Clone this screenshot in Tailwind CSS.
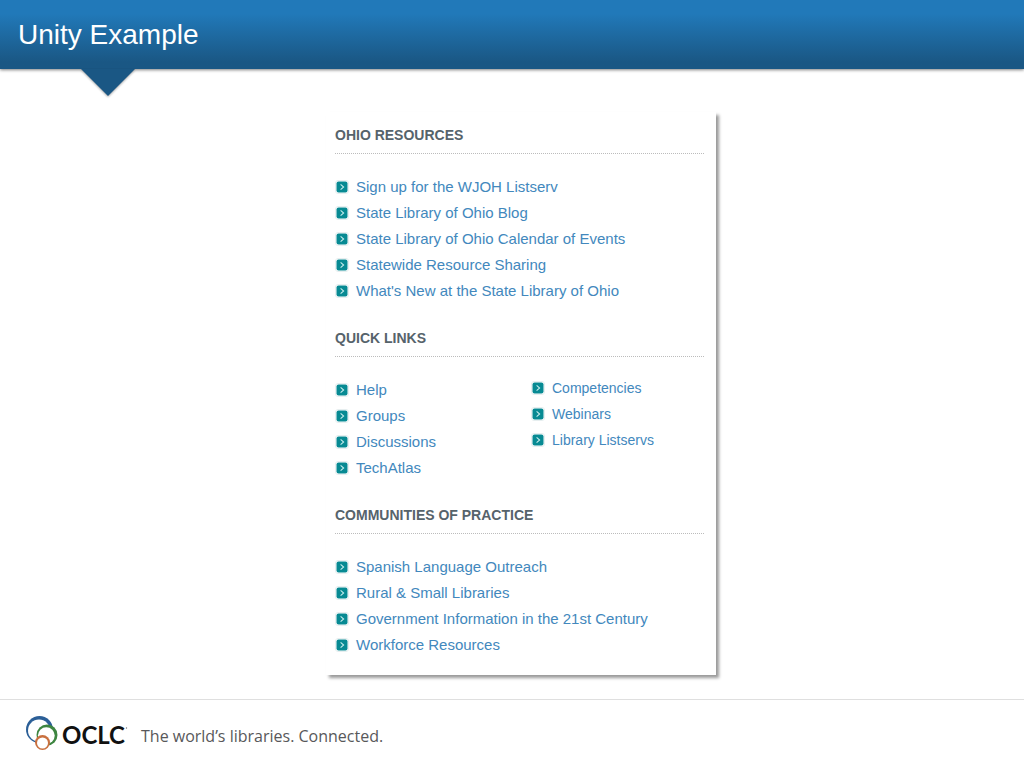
<!DOCTYPE html>
<html lang="en">
<head>
  <meta charset="UTF-8">
  <meta name="viewport" content="width=device-width, initial-scale=1">
  <title>Unity Example</title>
  <script src="https://cdn.jsdelivr.net/npm/@tailwindcss/browser@4"></script>
</head>
<body class="flex min-h-screen flex-col bg-white font-['Liberation_Sans',Arial,sans-serif]">
  <!-- icon shared by all links -->
  <svg class="hidden" aria-hidden="true">
    <symbol id="arrow" viewBox="0 0 14 14">
      <rect x="0.5" y="0.5" width="13" height="13" rx="2.5" fill="#fff" stroke="#e6eeef"/>
      <rect x="1.5" y="1.5" width="11" height="11" rx="2" fill="#078a93"/>
      <path d="M5.6 4.4 L8.6 7 L5.6 9.6" fill="none" stroke="#c5ecec" stroke-width="1.1"/>
    </symbol>
  </svg>

  <header class="relative bg-linear-to-b from-[#2179b9] from-20% to-[#1a5784] to-90% px-[18px] pt-[17px] pb-4 shadow-[0_1px_3px_rgba(0,0,0,0.5)]">
    <h1 class="text-[28px] leading-9 text-white">Unity Example</h1>
    <svg class="absolute top-full left-20 h-8 w-14 drop-shadow-[0_1px_1px_rgba(0,0,0,0.35)]" viewBox="0 0 56 32" aria-hidden="true">
      <path d="M1 0 H55 L28 27 Z" fill="#1a5784"/>
    </svg>
  </header>

  <main class="flex flex-1 items-start justify-center pt-[43px] pb-6">
    <div class="mr-[-18px] flex w-full max-w-[390px] flex-col gap-6 bg-white pt-[13px] pr-3 pb-[17px] pl-[9px] shadow-[3px_3px_3px_rgba(0,0,0,0.4)]">
      <section>
        <h2 class="border-b border-dotted border-[#bcbcbc] pb-2 text-sm leading-5 font-bold text-[#56636b]">OHIO RESOURCES</h2>
        <ul class="mt-5 text-[15px] leading-[26px] text-[#4288bd]">
          <li><a href="#" class="flex items-center gap-[7px]"><svg class="size-3.5"><use href="#arrow"/></svg>Sign up for the WJOH Listserv</a></li>
          <li><a href="#" class="flex items-center gap-[7px]"><svg class="size-3.5"><use href="#arrow"/></svg>State Library of Ohio Blog</a></li>
          <li><a href="#" class="flex items-center gap-[7px]"><svg class="size-3.5"><use href="#arrow"/></svg>State Library of Ohio Calendar of Events</a></li>
          <li><a href="#" class="flex items-center gap-[7px]"><svg class="size-3.5"><use href="#arrow"/></svg>Statewide Resource Sharing</a></li>
          <li><a href="#" class="flex items-center gap-[7px]"><svg class="size-3.5"><use href="#arrow"/></svg>What's New at the State Library of Ohio</a></li>
        </ul>
      </section>

      <section>
        <h2 class="border-b border-dotted border-[#bcbcbc] pb-2 text-sm leading-5 font-bold text-[#56636b]">QUICK LINKS</h2>
        <div class="mt-5 grid grid-cols-[196px_1fr] text-[#4288bd]">
          <ul class="text-[15px] leading-[26px]">
            <li><a href="#" class="flex items-center gap-[7px]"><svg class="size-3.5"><use href="#arrow"/></svg>Help</a></li>
            <li><a href="#" class="flex items-center gap-[7px]"><svg class="size-3.5"><use href="#arrow"/></svg>Groups</a></li>
            <li><a href="#" class="flex items-center gap-[7px]"><svg class="size-3.5"><use href="#arrow"/></svg>Discussions</a></li>
            <li><a href="#" class="flex items-center gap-[7px]"><svg class="size-3.5"><use href="#arrow"/></svg>TechAtlas</a></li>
          </ul>
          <ul class="-mt-0.5 text-sm leading-[26px]">
            <li><a href="#" class="flex items-center gap-[7px]"><svg class="size-3.5"><use href="#arrow"/></svg>Competencies</a></li>
            <li><a href="#" class="flex items-center gap-[7px]"><svg class="size-3.5"><use href="#arrow"/></svg>Webinars</a></li>
            <li><a href="#" class="flex items-center gap-[7px]"><svg class="size-3.5"><use href="#arrow"/></svg>Library Listservs</a></li>
          </ul>
        </div>
      </section>

      <section>
        <h2 class="border-b border-dotted border-[#bcbcbc] pb-2 text-sm leading-5 font-bold text-[#56636b]">COMMUNITIES OF PRACTICE</h2>
        <ul class="mt-5 text-[15px] leading-[26px] text-[#4288bd]">
          <li><a href="#" class="flex items-center gap-[7px]"><svg class="size-3.5"><use href="#arrow"/></svg>Spanish Language Outreach</a></li>
          <li><a href="#" class="flex items-center gap-[7px]"><svg class="size-3.5"><use href="#arrow"/></svg>Rural &amp; Small Libraries</a></li>
          <li><a href="#" class="flex items-center gap-[7px]"><svg class="size-3.5"><use href="#arrow"/></svg>Government Information in the 21st Century</a></li>
          <li><a href="#" class="flex items-center gap-[7px]"><svg class="size-3.5"><use href="#arrow"/></svg>Workforce Resources</a></li>
        </ul>
      </section>
    </div>
  </main>

  <footer class="flex items-center border-t border-[#dfdfdf] px-6 pt-3 pb-4">
    <svg class="h-10 w-[104px]" viewBox="0 0 104 40" role="img" aria-label="OCLC">
      <!-- ring, heavier at the top right -->
      <circle cx="15.5" cy="17.5" r="13.5" fill="#2b5f97"/>
      <circle cx="15" cy="18.5" r="11" fill="#fff"/>
      <circle cx="23" cy="23" r="10.5" fill="#3d8540"/>
      <circle cx="22.3" cy="23.6" r="8.4" fill="#fff"/>
      <circle cx="18.5" cy="30.5" r="7.5" fill="#c9703f"/>
      <circle cx="18.5" cy="31" r="5.5" fill="#fff"/>
      <text x="38" y="32" class="font-['Lato',sans-serif] text-[24px] font-bold" fill="#111">OCLC</text>
      <circle cx="102.5" cy="16" r="0.7" fill="#777"/>
    </svg>
    <p class="ml-[13px] pt-2 font-['Open_Sans',sans-serif] text-base text-[#58585a]">The world’s libraries. Connected.</p>
  </footer>
</body>
</html>
